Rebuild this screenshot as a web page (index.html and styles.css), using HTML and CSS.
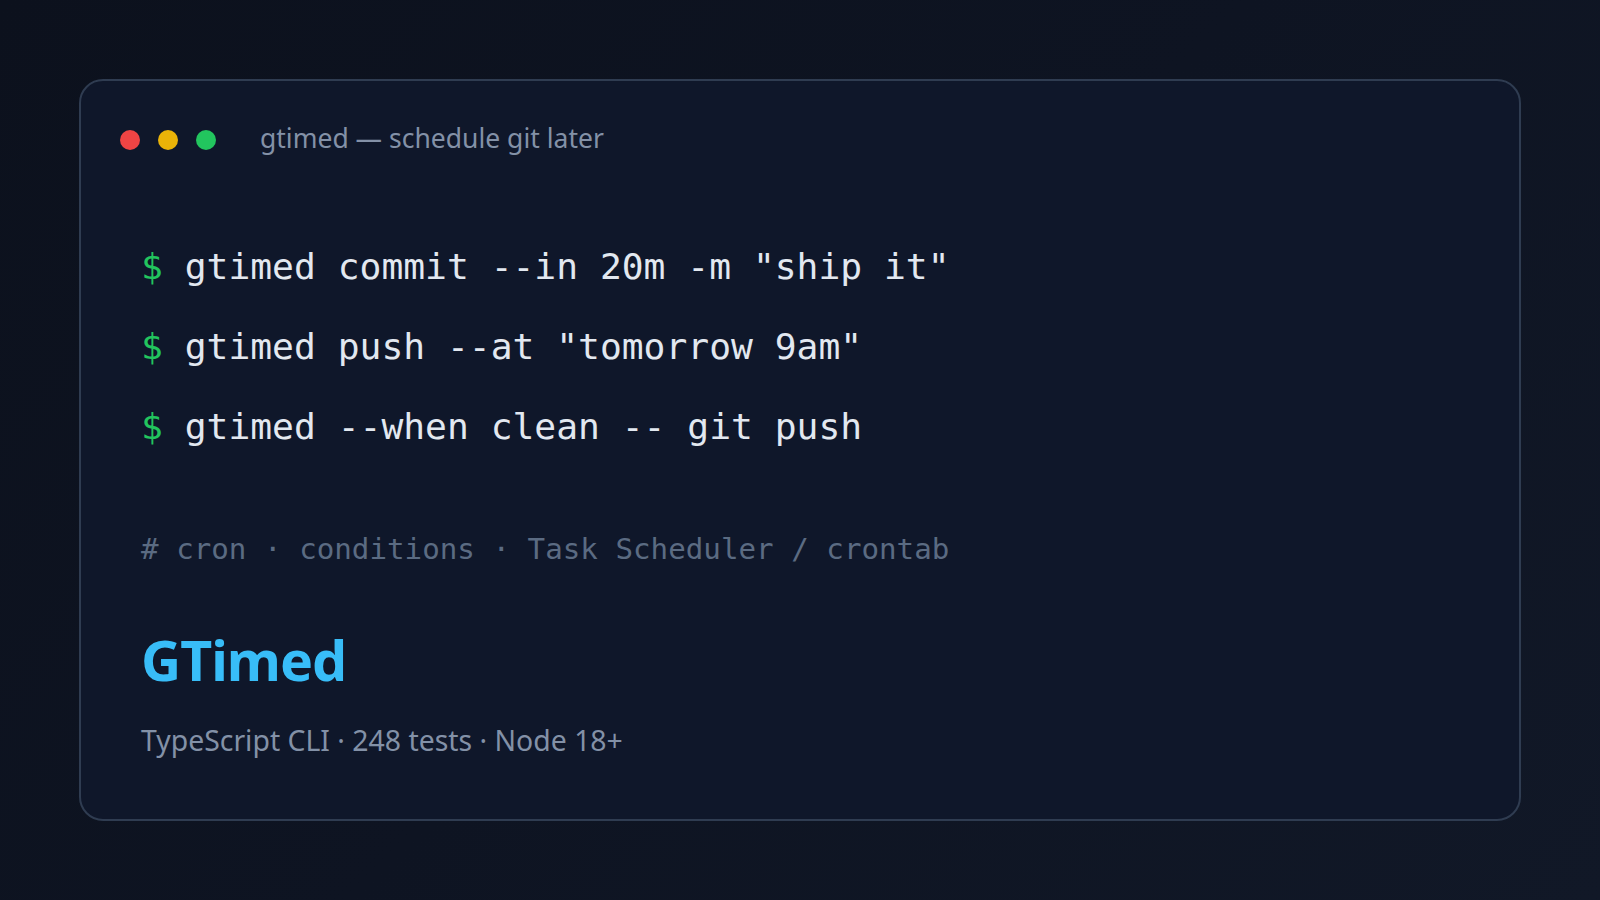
FILE: index.html
```html
<!DOCTYPE html>
<html lang="en">
<head>
<meta charset="utf-8">
<title>gtimed</title>
<link rel="stylesheet" href="styles.css">
</head>
<body>
<main class="card">
  <header class="titlebar">
    <div class="dots">
      <span class="dot red"></span>
      <span class="dot yellow"></span>
      <span class="dot green"></span>
    </div>
    <span class="wintitle">gtimed — schedule git later</span>
  </header>
  <section class="content">
    <div class="commands">
      <div class="cmd"><span class="prompt">$</span> gtimed commit --in 20m -m "ship it"</div>
      <div class="cmd"><span class="prompt">$</span> gtimed push --at "tomorrow 9am"</div>
      <div class="cmd"><span class="prompt">$</span> gtimed --when clean -- git push</div>
    </div>
    <div class="comment"># cron · conditions · Task Scheduler / crontab</div>
    <h1 class="brand">GTimed</h1>
    <p class="meta">TypeScript CLI · 248 tests · Node 18+</p>
  </section>
</main>
</body>
</html>
```
FILE: styles.css
```css
html, body {
  margin: 0;
  padding: 0;
}
body {
  width: 1600px;
  height: 900px;
  overflow: hidden;
  background: linear-gradient(135deg, #0c111d 0%, #0e1422 50%, #111827 100%);
  font-family: "Noto Sans", "Open Sans", sans-serif;
  padding: 79px;
  box-sizing: border-box;
}
.card {
  width: 1442px;
  height: 742px;
  box-sizing: border-box;
  border: 2px solid #2f3c51;
  border-radius: 24px;
  background: #0f172a;
  display: flex;
  flex-direction: column;
}
.titlebar {
  display: flex;
  align-items: center;
  height: 40px;
  margin-top: 39px;
  padding-left: 39px;
}
.dots {
  display: flex;
  gap: 18px;
}
.dot {
  width: 20px;
  height: 20px;
  border-radius: 50%;
  display: block;
}
.red { background: #ef4444; }
.yellow { background: #eab308; }
.green { background: #22c55e; }
.wintitle {
  margin-left: 44px;
  padding-bottom: 4px;
  color: #8391a7;
  font-size: 26.5px;
}
.content {
  padding: 0 60px;
  display: flex;
  flex-direction: column;
}
.commands {
  margin-top: 67px;
  font-family: "DejaVu Sans Mono", "Liberation Mono", monospace;
  font-size: 36.3px;
  color: #e2e8f0;
}
.cmd {
  height: 80px;
  line-height: 80px;
  white-space: pre;
}
.prompt {
  color: #22c55e;
}
.comment {
  margin-top: 62px;
  height: 40px;
  line-height: 40px;
  font-family: "DejaVu Sans Mono", "Liberation Mono", monospace;
  font-size: 29.2px;
  color: #5b6b82;
  white-space: pre;
}
.brand {
  margin: 51px 0 0;
  height: 80px;
  line-height: 80px;
  font-size: 55.5px;
  font-weight: 700;
  color: #38bdf8;
  letter-spacing: -1px;
}
.meta {
  margin: 20px 0 0;
  height: 40px;
  line-height: 40px;
  font-size: 28.4px;
  color: #8391a7;
}
```
